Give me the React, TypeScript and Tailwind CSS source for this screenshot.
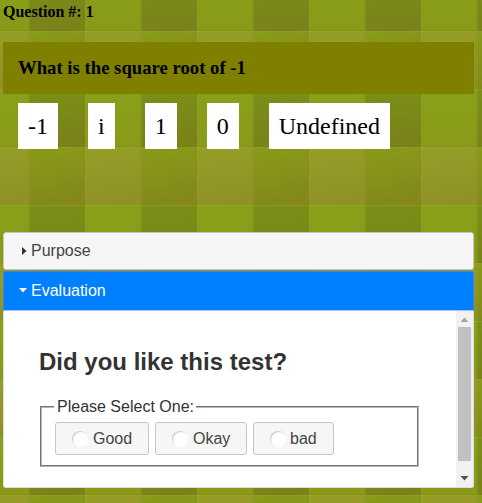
import React from "react";

const answers = ["-1", "i", "1", "0", "Undefined"];
const ratings = [
  { label: "Good", width: "w-[94px]", gap: "mr-[5px]" },
  { label: "Okay", width: "w-[92px]", gap: "mr-[5px]" },
  { label: "bad", width: "w-[81px]", gap: "mr-1" },
];

function PlaidBackground() {
  return (
    <svg className="absolute inset-0 -z-10" width="482" height="503" aria-hidden="true">
      <defs>
        <linearGradient id="olive" x1="0" y1="0" x2="0.15" y2="1">
          <stop offset="0" stopColor="#969e26" />
          <stop offset="1" stopColor="#8f9126" />
        </linearGradient>
        <linearGradient id="moss" x1="0" y1="0" x2="0.2" y2="1">
          <stop offset="0" stopColor="#889b19" />
          <stop offset="1" stopColor="#84891a" />
        </linearGradient>
        <linearGradient id="lime" x1="0" y1="0" x2="0" y2="1">
          <stop offset="0" stopColor="#8aa019" />
          <stop offset="1" stopColor="#889a18" />
        </linearGradient>
        <linearGradient id="dark" x1="0" y1="0" x2="0.1" y2="1">
          <stop offset="0" stopColor="#7b9017" />
          <stop offset="1" stopColor="#7a8219" />
        </linearGradient>
        <pattern id="plaid" x="-27" y="31" width="112" height="116" patternUnits="userSpaceOnUse">
          <rect width="56" height="58" fill="url(#olive)" />
          <rect x="56" width="56" height="58" fill="url(#moss)" />
          <rect y="58" width="56" height="58" fill="url(#lime)" />
          <rect x="56" y="58" width="56" height="58" fill="url(#dark)" />
          <path d="M.5 0V116M56.5 0V116" stroke="#a3a632" strokeOpacity=".22" />
          <path d="M55.5 0V116M111.5 0V116" stroke="#667414" strokeOpacity=".12" />
          <path d="M0 .5H112M0 58.5H112" stroke="#a6a636" strokeOpacity=".35" />
          <path d="M0 115.5H112" stroke="#667414" strokeOpacity=".12" />
        </pattern>
      </defs>
      <rect width="482" height="503" fill="url(#plaid)" />
    </svg>
  );
}

export default function App() {
  return (
    <main className="relative isolate h-[503px] w-[482px] overflow-hidden pl-[3px] font-['Liberation_Serif',serif] text-black">
      <PlaidBackground />
      <p className="h-[42px] pt-[3px] text-base leading-[18px] font-bold">Question #: 1</p>
      <h1 className="flex h-[52px] w-[471px] items-center bg-[#808000] pl-[15px] text-[18.72px] font-bold">
        What is the square root of -1
      </h1>
      <div className="mt-[9px] flex h-[46px] gap-[30px] pl-[15px] text-2xl">
        {answers.map((answer) => (
          <button key={answer} className="h-[46px] shrink-0 bg-white px-[10px] pb-px">
            {answer}
          </button>
        ))}
      </div>

      <section className="mt-[83px] w-[471px] font-['Liberation_Sans',sans-serif] text-base text-[#333333]">
        <div className="flex h-[38px] items-center rounded-[3px] border border-[#c5c5c5] bg-[#f6f6f6] pl-[18px] text-[#454545]">
          <svg width="5" height="8" className="mr-1 -mt-px" aria-hidden="true">
            <path d="M0 0L4.5 4L0 8Z" fill="#333" />
          </svg>
          <span className="-mt-px">Purpose</span>
        </div>
        <div className="mt-px flex h-[40px] items-center rounded-t-[3px] border border-[#3e83df] border-b-[#a9c5ed] bg-[#007fff] pl-[14px] text-white">
          <svg width="9" height="5" className="mr-1 -mt-px" aria-hidden="true">
            <path d="M1 0H9L5 4.5Z" fill="white" />
          </svg>
          <span>Evaluation</span>
        </div>
        <div className="flex h-[177px] justify-between overflow-hidden rounded-b-[3px] border border-t-0 border-[#dddddd] bg-white">
          <div className="pl-[35px]">
            <h2 className="pt-[35px] text-2xl leading-[32px] font-bold">Did you like this test?</h2>
            <div className="mt-[28px] ml-px h-[61px] w-[379px] border border-[#757575] border-r-[#b8b8b8] border-b-[#b8b8b8]">
              <div className="h-full border border-[#b8b8b8] border-r-[#757575] border-b-[#757575]">
                <div className="-mt-[13px] ml-3 w-[142px] bg-white pl-[3px] leading-[24px]">Please Select One:</div>
                <div className="mt-[3px] ml-[13px] flex gap-[6px]">
                  {ratings.map(({ label, width, gap }) => (
                    <label
                      key={label}
                      className={`flex h-[33px] items-center rounded-[3px] border border-[#c5c5c5] bg-[#f6f6f6] pl-4 text-[#454545] ${width}`}
                    >
                      <span className={`h-4 w-4 rounded-full bg-white shadow-[inset_1px_1px_1px_#cccccc] ${gap}`} />
                      {label}
                    </label>
                  ))}
                </div>
              </div>
            </div>
          </div>
          <div className="flex w-[17px] flex-col items-center bg-[#f1f1f1]">
            <svg width="17" height="16" className="shrink-0" aria-hidden="true">
              <path d="M4.5 11L8.5 6.5L12.5 11Z" fill="#a3a3a3" />
            </svg>
            <div className="h-[134px] w-[13px] shrink-0 bg-[#c1c1c1]" />
            <svg width="17" height="26" className="shrink-0" aria-hidden="true">
              <path d="M4.5 15H12.5L8.5 19.5Z" fill="#505050" />
            </svg>
          </div>
        </div>
      </section>
    </main>
  );
}
